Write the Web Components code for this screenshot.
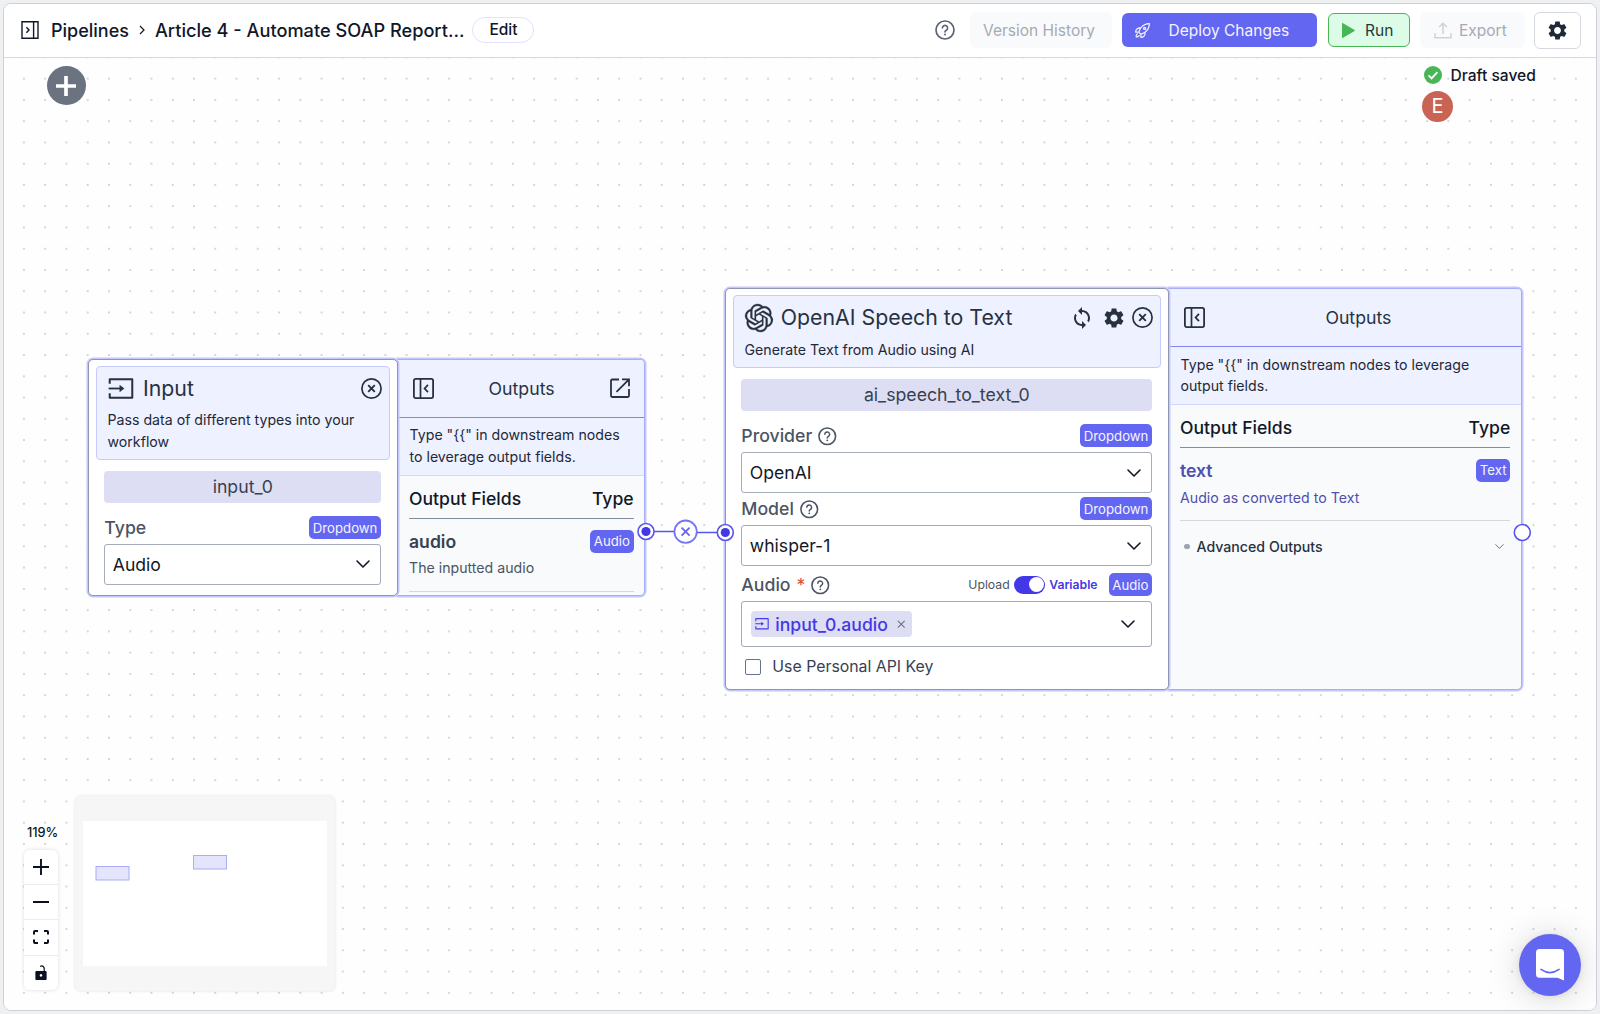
<!DOCTYPE html>
<html lang="en">
<head>
<meta charset="utf-8">
<title>Pipelines</title>
<style>
  html, body { margin: 0; height: 100%; }
  body {
    background: #eef0f2;
    font-family: Inter, "Liberation Sans", sans-serif;
    color: #111827;
    overflow: hidden;
  }
</style>
</head>
<body>
<pipeline-app></pipeline-app>

<script>
const ICONS = {
  sidebar: ['0 0 18 18', '<path d="M1 .8h16v16.4H1zM12.6 1v16" fill="none" stroke="currentColor" stroke-width="1.4"/><path d="M5.4 6.2 8 9l-2.6 2.8" fill="none" stroke="currentColor" stroke-width="1.4"/>'],
  chevronRight: ['0 0 6 10', '<path d="m1 1 4 4-4 4" fill="none" stroke="currentColor" stroke-width="1.2"/>'],
  chevronDown: ['0 0 14 8', '<path d="m1 1 6 6 6-6" fill="none" stroke="currentColor" stroke-width="1.6" stroke-linecap="round" stroke-linejoin="round"/>'],
  help: ['0 0 20 20', '<circle cx="10" cy="10" r="9" fill="none" stroke="currentColor" stroke-width="1.7"/><path d="M7.4 7.9a2.6 2.6 0 1 1 3.9 2.3c-.9.5-1.3 1-1.3 1.8" fill="none" stroke="currentColor" stroke-width="1.6" stroke-linecap="round"/><circle cx="10" cy="14.4" r="1" fill="currentColor"/>'],
  rocket: ['0 0 24 24', '<path fill="none" stroke="currentColor" stroke-width="1.7" stroke-linecap="round" stroke-linejoin="round" d="M15.59 14.37a6 6 0 0 1-5.84 7.38v-4.8m5.84-2.58a14.98 14.98 0 0 0 6.16-12.12A14.98 14.98 0 0 0 9.631 8.41m5.96 5.96a14.926 14.926 0 0 1-5.841 2.58m-.119-8.54a6 6 0 0 0-7.381 5.84h4.8m2.581-5.84a14.927 14.927 0 0 0-2.58 5.84m2.699 2.7c-.103.021-.207.041-.311.06a15.09 15.09 0 0 1-2.448-2.448 14.9 14.9 0 0 1 .06-.312m-2.24 2.39a4.493 4.493 0 0 0-1.757 4.306 4.493 4.493 0 0 0 4.306-1.758M16.5 9a1.5 1.5 0 1 1-3 0 1.5 1.5 0 0 1 3 0Z"/>'],
  play: ['0 0 13 15', '<path d="M0 .4v14.2c0 .3.3.5.6.3l12-7c.3-.2.3-.6 0-.8L.6.1C.3 0 0 .1 0 .4Z" fill="currentColor"/>'],
  upload: ['0 0 18 17', '<path d="M9 12V1.2M5.2 5 9 1.2 12.8 5M1 11.2v4.6h16v-4.6" fill="none" stroke="currentColor" stroke-width="1.5" stroke-linejoin="round"/>'],
  gear: ['2.2 2 19.6 20', '<path fill="currentColor" d="M19.14 12.94c.04-.3.06-.61.06-.94 0-.32-.02-.64-.07-.94l2.03-1.58c.18-.14.23-.41.12-.61l-1.92-3.32c-.12-.22-.37-.29-.59-.22l-2.39.96c-.5-.38-1.03-.7-1.62-.94l-.36-2.54c-.04-.24-.24-.41-.48-.41h-3.84c-.24 0-.43.17-.47.41l-.36 2.54c-.59.24-1.13.57-1.62.94l-2.39-.96c-.22-.08-.47 0-.59.22L2.74 8.87c-.12.21-.08.47.12.61l2.03 1.58c-.05.3-.09.63-.09.94s.02.64.07.94l-2.03 1.58c-.18.14-.23.41-.12.61l1.92 3.32c.12.22.37.29.59.22l2.39-.96c.5.38 1.03.7 1.62.94l.36 2.54c.05.24.24.41.48.41h3.84c.24 0 .44-.17.47-.41l.36-2.54c.59-.24 1.13-.56 1.62-.94l2.39.96c.22.08.47 0 .59-.22l1.92-3.32c.12-.22.07-.47-.12-.61l-2.01-1.58zM12 15.6c-1.98 0-3.6-1.62-3.6-3.6s1.62-3.6 3.6-3.6 3.6 1.62 3.6 3.6-1.62 3.6-3.6 3.6z"/>'],
  sync: ['0 0 24 24', '<path fill="currentColor" d="M12 4V1L8 5l4 4V6c3.31 0 6 2.69 6 6 0 1.01-.25 1.97-.7 2.8l1.46 1.46C19.54 15.03 20 13.57 20 12c0-4.42-3.58-8-8-8zm0 14c-3.31 0-6-2.69-6-6 0-1.01.25-1.97.7-2.8L5.24 7.74C4.46 8.97 4 10.43 4 12c0 4.42 3.58 8 8 8v3l4-4-4-4v3z"/>'],
  close: ['0 0 21 21', '<circle cx="10.5" cy="10.5" r="9.6" fill="none" stroke="currentColor" stroke-width="1.7"/><path d="m7.2 7.2 6.6 6.6m0-6.6-6.6 6.6" stroke="currentColor" stroke-width="1.9"/>'],
  cross: ['0 0 10 10', '<path d="m1 1 8 8M9 1 1 9" stroke="currentColor" stroke-width="1.3"/>'],
  input: ['0 0 26 22', '<path d="M1.2 6V1.2h23.6v19.6H1.2V16" fill="none" stroke="currentColor" stroke-width="2.1" stroke-linejoin="round"/><path d="M0 11h14" stroke="currentColor" stroke-width="1.9"/><path d="m11.5 7.2 5 3.8-5 3.8z" fill="currentColor"/>'],
  openai: ['0 0 24 24', '<path fill="currentColor" stroke="currentColor" stroke-width=".25" d="M22.2819 9.8211a5.9847 5.9847 0 0 0-.5157-4.9108 6.0462 6.0462 0 0 0-6.5098-2.9A6.0651 6.0651 0 0 0 4.9807 4.1818a5.9847 5.9847 0 0 0-3.9977 2.9 6.0462 6.0462 0 0 0 .7427 7.0966 5.98 5.98 0 0 0 .511 4.9107 6.051 6.051 0 0 0 6.5146 2.9001A5.9847 5.9847 0 0 0 13.2599 24a6.0557 6.0557 0 0 0 5.7718-4.2058 5.9894 5.9894 0 0 0 3.9977-2.9001 6.0557 6.0557 0 0 0-.7475-7.0729zm-9.022 12.6081a4.4755 4.4755 0 0 1-2.8764-1.0408l.1419-.0804 4.7783-2.7582a.7948.7948 0 0 0 .3927-.6813v-6.7369l2.02 1.1686a.071.071 0 0 1 .038.052v5.5826a4.504 4.504 0 0 1-4.4945 4.4944zm-9.6607-4.1254a4.4708 4.4708 0 0 1-.5346-3.0137l.142.0852 4.783 2.7582a.7712.7712 0 0 0 .7806 0l5.8428-3.3685v2.3324a.0804.0804 0 0 1-.0332.0615L9.74 19.9502a4.4992 4.4992 0 0 1-6.1408-1.6464zM2.3408 7.8956a4.485 4.485 0 0 1 2.3655-1.9728V11.6a.7664.7664 0 0 0 .3879.6765l5.8144 3.3543-2.0201 1.1685a.0757.0757 0 0 1-.071 0l-4.8303-2.7865A4.504 4.504 0 0 1 2.3408 7.872zm16.5963 3.8558L13.1038 8.364 15.1192 7.2a.0757.0757 0 0 1 .071 0l4.8303 2.7913a4.4944 4.4944 0 0 1-.6765 8.1042v-5.6772a.79.79 0 0 0-.407-.667zm2.0107-3.0231l-.142-.0852-4.7735-2.7818a.7759.7759 0 0 0-.7854 0L9.409 9.2297V6.8974a.0662.0662 0 0 1 .0284-.0615l4.8303-2.7866a4.4992 4.4992 0 0 1 6.6802 4.66zM8.3065 12.863l-2.02-1.1638a.0804.0804 0 0 1-.038-.0567V6.0742a4.4992 4.4992 0 0 1 7.3757-3.4537l-.142.0805L8.704 5.459a.7948.7948 0 0 0-.3927.6813zm1.0976-2.3654l2.602-1.4998 2.6069 1.4998v2.9994l-2.5974 1.4997-2.6067-1.4997Z"/>'],
  panel: ['0 0 21 21', '<rect x=".9" y=".9" width="19.2" height="19.2" rx="1.8" fill="none" stroke="currentColor" stroke-width="1.8"/><path d="M7.5 1v19" stroke="currentColor" stroke-width="1.7"/><path d="M15 6.8 11.6 10.5l3.4 3.7" fill="none" stroke="currentColor" stroke-width="1.8"/>'],
  external: ['0 0 20 20', '<path d="M9 1.5H2.2q-1.2 0-1.2 1.2v15.1q0 1.2 1.2 1.2h15.6q1.2 0 1.2-1.2V11" fill="none" stroke="currentColor" stroke-width="1.8"/><path d="M12 1.3h7v7M18.5 1.8 6.5 13.8" fill="none" stroke="currentColor" stroke-width="1.8"/>'],
  check: ['0 0 18 18', '<circle cx="9" cy="9" r="9" fill="#46b754"/><path d="m4.6 9.3 3 3 5.8-6.2" fill="none" stroke="#fff" stroke-width="1.9"/>'],
  plus: ['0 0 20 20', '<path d="M10 0v20M0 10h20" stroke="currentColor" stroke-width="3.7"/>'],
  zoomIn: ['0 0 16 16', '<path d="M8 0v16M0 8h16" stroke="currentColor" stroke-width="1.9"/>'],
  zoomOut: ['0 0 16 16', '<path d="M0 8h16" stroke="currentColor" stroke-width="1.9"/>'],
  fit: ['0 0 16 14', '<path d="M5 1H2Q1 1 1 2v2.5M11 1h3q1 0 1 1v2.5M5 13H2q-1 0-1-1V9.5M11 13h3q1 0 1-1V9.5" fill="none" stroke="currentColor" stroke-width="2"/>'],
  lock: ['0 0 12 16', '<path fill="currentColor" fill-rule="evenodd" d="M1 6.5h7.8V4.2C8.8 2.6 7.9 1.6 6.5 1.6q-.8 0-1.3.4l-.3-1C5.3.4 6 .2 6.7.2c2 0 3.4 1.6 3.4 3.8v2.5h.9q1 0 1 1V15q0 1-1 1H1q-1 0-1-1V7.5q0-1 1-1ZM6 9.7a1.4 1.4 0 1 0 .01 0Z"/>'],
  chat: ['0 0 28 32', '<path d="M3.5 0h21Q28 0 28 3.5V31.5L21.5 28.8H3.5Q0 28.8 0 25.3V3.5Q0 0 3.5 0Z" fill="#fff"/><path d="M5 20.4q9 6.4 18 0" fill="none" stroke="#6366f1" stroke-width="1.7" stroke-linecap="round"/>']
};

class BaseElement extends HTMLElement {
  constructor() {
    super();
    this.attachShadow({ mode: 'open' });
  }

  connectedCallback() {
    this.shadowRoot.innerHTML = this.render();
  }

  attr(name, fallback = '') {
    return this.getAttribute(name) || fallback;
  }
}

class UiIcon extends BaseElement {
  render() {
    const [box, body] = ICONS[this.attr('name')];
    const w = this.attr('w', '16');
    const h = this.attr('h', w);
    return `
      <style>
        :host { display: inline-flex; flex: none; }
        svg { display: block; overflow: visible; }
      </style>
      <svg width="${w}" height="${h}" viewBox="${box}" aria-hidden="true">${body}</svg>
    `;
  }
}

class TypeBadge extends BaseElement {
  render() {
    return `
      <style>
        :host {
          display: inline-flex;
          align-items: center;
          flex: none;
          height: 23px;
          padding: 0 3.8px;
          border-radius: 5px;
          background: #6366f1;
          color: #f5f5ff;
          font-size: 13.2px;
          font-weight: 400;
        }
      </style>
      <slot></slot>
    `;
  }
}

class ToolButton extends BaseElement {
  render() {
    return `
      <style>
        :host {
          display: flex;
          align-items: center;
          box-sizing: border-box;
          flex: none;
          height: 34px;
          border-radius: 6px;
          font-size: 15.5px;
        }
        :host([kind="muted"]) {
          height: 36px;
          background: #f9fafb;
          color: #a5aab4;
        }
        :host([kind="primary"]) {
          background: #6366f1;
          color: #f3f3ff;
        }
        :host([kind="run"]) {
          background: #dcfce7;
          border: 1.5px solid #46b754;
          color: #1f3b39;
        }
        :host([kind="outline"]) {
          height: 37px;
          background: #fff;
          border: 1.5px solid #d6d9e0;
          color: #1f2937;
          justify-content: center;
        }
      </style>
      <slot></slot>
    `;
  }
}

class TopBar extends BaseElement {
  render() {
    return `
      <style>
        :host {
          display: flex;
          align-items: center;
          box-sizing: border-box;
          height: 54px;
          padding: 0 15.5px 1px 17px;
          border-bottom: 1px solid #d5d8df;
          background: #fff;
          font-size: 18px;
          font-weight: 500;
          color: #0f172a;
        }
        .root { margin: 0 10px 0 12px; }
        .title { margin-left: 10px; font-size: 18.2px; white-space: nowrap; }
        .edit {
          box-sizing: border-box;
          width: 62px;
          height: 26px;
          margin-left: 8px;
          border: 1.2px solid #dfe1fd;
          border-radius: 13px;
          font-size: 15.5px;
          line-height: 24px;
          text-align: center;
        }
        .actions {
          display: flex;
          align-items: center;
          margin-left: auto;
          font-weight: 400;
        }
        .help { color: #5b6472; margin-right: 14.5px; }
        .history { width: 142px; padding-right: 3px; justify-content: center; margin-right: 10.5px; }
        .deploy { width: 194.5px; padding-left: 12px; gap: 17.5px; margin-right: 11px; }
        .run { width: 82.5px; padding-left: 13.5px; gap: 10px; margin-right: 10px; }
        .run ui-icon { color: #46b754; }
        .export { width: 105px; padding-left: 14px; gap: 7px; margin-right: 9px; }
        .export ui-icon { color: #cfd2d8; }
        .settings { width: 46.5px; }
      </style>
      <ui-icon name="sidebar" w="18"></ui-icon>
      <span class="root">Pipelines</span>
      <ui-icon name="chevronRight" w="6" h="10"></ui-icon>
      <span class="title">Article 4 - Automate SOAP Report...</span>
      <span class="edit">Edit</span>
      <div class="actions">
        <ui-icon class="help" name="help" w="20"></ui-icon>
        <tool-button class="history" kind="muted">Version History</tool-button>
        <tool-button class="deploy" kind="primary"><ui-icon name="rocket" w="17"></ui-icon>Deploy Changes</tool-button>
        <tool-button class="run" kind="run"><ui-icon name="play" w="13" h="15"></ui-icon>Run</tool-button>
        <tool-button class="export" kind="muted"><ui-icon name="upload" w="18" h="17"></ui-icon>Export</tool-button>
        <tool-button class="settings" kind="outline"><ui-icon name="gear" w="19"></ui-icon></tool-button>
      </div>
    `;
  }
}

// A node on the canvas: the settings card plus a slot for its outputs panel.
class PipelineNode extends BaseElement {
  render() {
    return `
      <style>
        :host { display: flex; position: absolute; font-size: 14.17px; }
        .card {
          box-sizing: border-box;
          flex: none;
          width: var(--card-width);
          padding: 6px 7px 0;
          background: #fff;
          border: 1px solid #8e96b4;
          border-radius: 5px;
          box-shadow: 0 0 0 1.5px #c4c7fb;
          position: relative;
          z-index: 1;
        }
        header {
          box-sizing: border-box;
          padding: 0 7px 7px 10.5px;
          border: 1px solid #c7cafc;
          border-radius: 4px;
          background: #eef1ff;
          line-height: 21.26px;
          color: #1f2937;
        }
        .head { display: flex; align-items: center; height: 42.4px; color: #27313f; }
        h2 { margin: 0 0 0 var(--title-gap, 9px); font-size: 21.3px; font-weight: 400; flex: 1; }
        .tools { display: flex; align-items: center; }
        .name {
          margin: 11px 8.3px 12.8px;
          height: 32px;
          border-radius: 4px;
          background: #dddef3;
          color: #374151;
          font-size: 17.7px;
          line-height: 32px;
          text-align: center;
        }
        .fields { display: block; padding: 0 8.3px; }
      </style>
      <section class="card">
        <header>
          <div class="head">
            <slot name="icon"></slot>
            <h2>${this.attr('heading')}</h2>
            <div class="tools"><slot name="tools"></slot><ui-icon name="close" w="21"></ui-icon></div>
          </div>
          <div>${this.attr('description')}</div>
        </header>
        <div class="name">${this.attr('node-id')}</div>
        <div class="fields"><slot></slot></div>
      </section>
      <slot name="outputs"></slot>
    `;
  }
}

class NodeField extends BaseElement {
  render() {
    const required = this.hasAttribute('required') ? '<span class="star">*</span>' : '';
    const help = this.hasAttribute('help') ? '<ui-icon name="help" w="18.5"></ui-icon>' : '';
    return `
      <style>
        :host { display: block; }
        .row { display: flex; align-items: center; height: 24px; margin-bottom: 4.2px; color: #4b5563; }
        .label { font-size: 17.7px; font-weight: 500; margin-right: 6px; }
        .star { color: #dc4a41; font-size: 17.6px; margin-right: 6px; }
        .extra { display: flex; align-items: center; margin-left: auto; }
      </style>
      <div class="row">
        <span class="label">${this.attr('label')}</span>${required}${help}
        <span class="extra"><slot name="extra"></slot><type-badge>${this.attr('type')}</type-badge></span>
      </div>
      <slot></slot>
    `;
  }
}

class SelectBox extends BaseElement {
  render() {
    return `
      <style>
        :host {
          display: flex;
          align-items: center;
          justify-content: space-between;
          box-sizing: border-box;
          height: 41px;
          padding: 0 10px 0 7.5px;
          border: 1px solid #a5abb8;
          border-radius: 3px;
          background: #fff;
          color: #111827;
          font-size: 17.6px;
        }
        :host([tall]) { height: 46px; padding: 0 16px 0 9px; }
      </style>
      <slot></slot>
      <ui-icon name="chevronDown" w="14" h="8"></ui-icon>
    `;
  }
}

class VariableChip extends BaseElement {
  render() {
    return `
      <style>
        :host {
          display: flex;
          align-items: center;
          height: 26.5px;
          padding: 0 7px 0 4px;
          border-radius: 4px;
          background: #dddef3;
          color: #4338e8;
          font-size: 17.6px;
          font-weight: 500;
        }
        span { margin: 0 9px 0 6px; }
        .remove { color: #6b7280; }
      </style>
      <ui-icon name="input" w="14" h="11.5"></ui-icon>
      <span><slot></slot></span>
      <ui-icon class="remove" name="cross" w="8.5"></ui-icon>
    `;
  }
}

class ModeToggle extends BaseElement {
  render() {
    return `
      <style>
        :host { display: flex; align-items: center; margin-right: 11px; font-size: 12.25px; color: #4b5563; }
        .track {
          display: flex;
          justify-content: flex-end;
          box-sizing: border-box;
          width: 31.5px;
          height: 18px;
          padding: 1.5px;
          margin: 0 4px;
          border-radius: 9px;
          background: #4338e8;
        }
        .thumb { width: 15px; height: 15px; border-radius: 50%; background: #fff; }
        b { font-weight: 600; font-size: 12.2px; color: #4338e8; }
      </style>
      <span>Upload</span>
      <span class="track"><span class="thumb"></span></span>
      <b>Variable</b>
    `;
  }
}

class CheckRow extends BaseElement {
  render() {
    return `
      <style>
        :host { display: flex; align-items: center; height: 39.5px; padding-left: 3.5px; font-size: 15.85px; color: #374151; }
        i { box-sizing: border-box; width: 16.5px; height: 16.5px; margin-right: 11px; border: 1.6px solid #64748b; border-radius: 2px; }
      </style>
      <i></i><slot></slot>
    `;
  }
}

class OutputPanel extends BaseElement {
  render() {
    const external = this.hasAttribute('external') ? '<ui-icon name="external" w="20"></ui-icon>' : '';
    return `
      <style>
        :host {
          display: block;
          box-sizing: border-box;
          flex: 1;
          border: 1px solid #a9acf8;
          border-left: 0;
          border-radius: 0 5px 5px 0;
          box-shadow: 0 0 0 1.5px #c4c7fb;
          background: #f8fafc;
          overflow: hidden;
        }
        .head {
          display: flex;
          align-items: center;
          box-sizing: border-box;
          height: 57.5px;
          padding: 0 8.5px 0 15px;
          border-bottom: 1px solid #8284f3;
          background: #eef1ff;
          color: #27313f;
          font-size: 17.7px;
        }
        :host([external]) .head { padding-right: 14.5px; }
        .head span { flex: 1; text-align: center; }
        .hint {
          box-sizing: border-box;
          height: 58px;
          padding: 6.9px 11px 0 12px;
          border-bottom: 1px solid #d3d6fd;
          background: #eef1ff;
          line-height: 21.26px;
          color: #1f2937;
        }
        .fields { padding: 0 10.5px 0 11.5px; }
        .columns {
          display: flex;
          justify-content: space-between;
          align-items: center;
          box-sizing: border-box;
          height: 43px;
          padding-top: 4px;
          border-bottom: 1.4px solid #848d9f;
          font-size: 17.6px;
          font-weight: 500;
        }
      </style>
      <div class="head"><ui-icon name="panel" w="21"></ui-icon><span>Outputs</span>${external}</div>
      <div class="hint">Type "{{" in downstream nodes to leverage output fields.</div>
      <div class="fields">
        <div class="columns"><span>Output Fields</span><span>Type</span></div>
        <slot></slot>
      </div>
    `;
  }
}

class OutputField extends BaseElement {
  render() {
    return `
      <style>
        :host {
          display: block;
          box-sizing: border-box;
          height: 73.5px;
          padding-top: 11px;
          border-bottom: 1px solid #d5d8dd;
          color: #4b5563;
        }
        :host([linked]) { color: #4f4fae; }
        .row { display: flex; justify-content: space-between; align-items: center; height: 23px; }
        b { font-size: 17.6px; font-weight: 600; color: #374151; }
        :host([linked]) b { color: #4f4fae; }
        p { margin: 4.7px 0 0; line-height: 21.26px; }
      </style>
      <div class="row"><b>${this.attr('name')}</b><type-badge>${this.attr('type')}</type-badge></div>
      <p><slot></slot></p>
    `;
  }
}

class AdvancedOutputs extends BaseElement {
  render() {
    return `
      <style>
        :host { display: flex; align-items: center; height: 50px; padding: 0 6px 0 4px; font-weight: 500; color: #27313f; }
        i { width: 5.5px; height: 5.5px; margin-right: 7px; border-radius: 50%; background: #9ca3af; }
        ui-icon { margin-left: auto; color: #6b7484; }
      </style>
      <i></i><slot></slot><ui-icon name="chevronDown" w="9" h="5"></ui-icon>
    `;
  }
}

// Dotted grid drawn with a pattern, so fractional spacing stays even.
class DotGrid extends BaseElement {
  render() {
    return `
      <style>
        :host { display: block; position: absolute; inset: 0; }
        svg { display: block; width: 100%; height: 100%; }
      </style>
      <svg aria-hidden="true">
        <pattern id="dots" x="9.3" y="10" width="21.26" height="21.26" patternUnits="userSpaceOnUse">
          <circle cx="10.63" cy="10.63" r=".9" fill="#bfc3ca"/>
        </pattern>
        <rect width="100%" height="100%" fill="url(#dots)"/>
      </svg>
    `;
  }
}

class NodeEdges extends BaseElement {
  render() {
    return `
      <style>
        :host { display: block; position: absolute; inset: 0; z-index: 2; }
        svg { display: block; width: 100%; height: 100%; }
      </style>
      <svg aria-hidden="true" fill="#fff" stroke="#5855ee" stroke-width="1.6">
        <path d="M642 473.5h28M692 474.5h29"/>
        <circle cx="642" cy="473.5" r="8"/>
        <circle cx="642" cy="473.5" r="4.6" fill="#4338e8" stroke="none"/>
        <circle cx="721.3" cy="474.5" r="8"/>
        <circle cx="721.3" cy="474.5" r="4.6" fill="#4338e8" stroke="none"/>
        <circle cx="681.6" cy="473.7" r="11.2" stroke="#7375f2" stroke-width="1.8"/>
        <path d="m677.6 469.7 8 8m0-8-8 8" stroke="#6366f1" stroke-width="1.8"/>
        <circle cx="1518.3" cy="474.5" r="8"/>
      </svg>
    `;
  }
}

class SaveStatus extends BaseElement {
  render() {
    return `
      <style>
        :host { display: flex; flex-direction: column; gap: 6.5px; position: absolute; left: 1418px; top: 7.5px; font-size: 15.6px; font-weight: 500; }
        .saved { display: flex; align-items: center; gap: 9px; height: 19px; padding-left: 1.5px; }
        .avatar {
          width: 31px;
          height: 31px;
          border-radius: 50%;
          background: #c96455;
          color: #fff;
          font-size: 20px;
          font-weight: 400;
          line-height: 31px;
          text-align: center;
        }
      </style>
      <div class="saved"><ui-icon name="check" w="18"></ui-icon>Draft saved</div>
      <div class="avatar">E</div>
    `;
  }
}

class AddButton extends BaseElement {
  render() {
    return `
      <style>
        :host {
          display: flex;
          align-items: center;
          justify-content: center;
          position: absolute;
          left: 42.7px;
          top: 8px;
          width: 39px;
          height: 39px;
          border-radius: 50%;
          background: #6b7280;
          color: #fff;
        }
      </style>
      <ui-icon name="plus" w="20"></ui-icon>
    `;
  }
}

class ZoomControls extends BaseElement {
  render() {
    const buttons = [['zoomIn', 16, 16], ['zoomOut', 16, 16], ['fit', 16, 14], ['lock', 12, 15]];
    return `
      <style>
        :host { display: flex; flex-direction: column; align-items: center; position: absolute; left: 18.6px; top: 766px; width: 36px; }
        .level { height: 26px; font-size: 12.8px; font-weight: 500; line-height: 18px; margin-left: 4px; }
        .stack { border-radius: 6px; background: #fff; box-shadow: 0 0 4px rgba(0, 0, 0, .13); overflow: hidden; }
        .btn {
          display: flex;
          align-items: center;
          justify-content: center;
          box-sizing: border-box;
          width: 34px;
          height: 35.2px;
          border-bottom: 1.4px solid #ececee;
          color: #0b1020;
        }
        .btn:last-child { border-bottom: 0; height: 34px; }
      </style>
      <div class="level">119%</div>
      <div class="stack">
        ${buttons.map(([name, w, h]) => `<div class="btn"><ui-icon name="${name}" w="${w}" h="${h}"></ui-icon></div>`).join('')}
      </div>
    `;
  }
}

class MiniMap extends BaseElement {
  render() {
    return `
      <style>
        :host {
          display: flex;
          align-items: center;
          justify-content: center;
          position: absolute;
          left: 71px;
          top: 738px;
          width: 260px;
          height: 195px;
          border-radius: 6px;
          background: #f6f6f6;
          box-shadow: 0 0 3px rgba(0, 0, 0, .13);
        }
        svg { display: block; background: #fff; }
      </style>
      <svg width="244" height="145" fill="#e4e5fd" stroke="#a9abf7">
        <rect x="13" y="45.5" width="33" height="13.5"/>
        <rect x="110.5" y="34.5" width="33" height="13.5"/>
      </svg>
    `;
  }
}

class ChatLauncher extends BaseElement {
  render() {
    return `
      <style>
        :host {
          display: flex;
          align-items: center;
          justify-content: center;
          position: absolute;
          left: 1515.4px;
          top: 876px;
          width: 62px;
          height: 62px;
          border-radius: 50%;
          background: #6366f1;
          box-shadow: 0 1px 7px rgba(0, 0, 0, .08), 0 2px 34px rgba(0, 0, 0, .16);
        }
      </style>
      <ui-icon name="chat" w="28" h="32"></ui-icon>
    `;
  }
}

class PipelineApp extends BaseElement {
  render() {
    return `
      <style>
        :host { display: block; box-sizing: border-box; height: 100vh; padding: 3px; }
        .frame {
          display: flex;
          flex-direction: column;
          box-sizing: border-box;
          height: 1008px;
          border: 1px solid #cdd0d8;
          border-radius: 8px;
          background: #fff;
          overflow: hidden;
        }
        .canvas { flex: 1; position: relative; overflow: hidden; background: #fefefe; }
        .input { left: 84px; top: 301px; width: 557.2px; height: 237px; --card-width: 309.5px; --title-gap: 9px; }
        .speech { left: 721px; top: 230.4px; width: 796.8px; height: 401.4px; --card-width: 443.5px; --title-gap: 8.3px; }
        .input > [slot="icon"] { margin-left: .5px; }
        .speech > [slot="tools"] { margin-right: 8px; }
        .speech > .sync { margin-right: 9.5px; }
        .provider { margin-bottom: 3.8px; }
        .model { margin-bottom: 6.8px; }
      </style>
      <div class="frame">
        <top-bar></top-bar>
        <div class="canvas">
          <dot-grid></dot-grid>
          <add-button></add-button>
          <save-status></save-status>

          <pipeline-node class="input" heading="Input" node-id="input_0"
            description="Pass data of different types into your workflow">
            <ui-icon slot="icon" name="input" w="26" h="21"></ui-icon>
            <node-field label="Type" type="Dropdown"><select-box>Audio</select-box></node-field>
            <output-panel slot="outputs" external>
              <output-field name="audio" type="Audio">The inputted audio</output-field>
            </output-panel>
          </pipeline-node>

          <pipeline-node class="speech" heading="OpenAI Speech to Text" node-id="ai_speech_to_text_0"
            description="Generate Text from Audio using AI">
            <ui-icon slot="icon" name="openai" w="28"></ui-icon>
            <ui-icon slot="tools" class="sync" name="sync" w="24"></ui-icon>
            <ui-icon slot="tools" name="gear" w="20"></ui-icon>
            <node-field class="provider" label="Provider" type="Dropdown" help><select-box>OpenAI</select-box></node-field>
            <node-field class="model" label="Model" type="Dropdown" help><select-box>whisper-1</select-box></node-field>
            <node-field label="Audio" type="Audio" help required>
              <mode-toggle slot="extra"></mode-toggle>
              <select-box tall><variable-chip>input_0.audio</variable-chip></select-box>
            </node-field>
            <check-row>Use Personal API Key</check-row>
            <output-panel slot="outputs">
              <output-field name="text" type="Text" linked>Audio as converted to Text</output-field>
              <advanced-outputs>Advanced Outputs</advanced-outputs>
            </output-panel>
          </pipeline-node>

          <node-edges></node-edges>
          <zoom-controls></zoom-controls>
          <mini-map></mini-map>
          <chat-launcher></chat-launcher>
        </div>
      </div>
    `;
  }
}

customElements.define('ui-icon', UiIcon);
customElements.define('type-badge', TypeBadge);
customElements.define('tool-button', ToolButton);
customElements.define('top-bar', TopBar);
customElements.define('pipeline-node', PipelineNode);
customElements.define('node-field', NodeField);
customElements.define('select-box', SelectBox);
customElements.define('variable-chip', VariableChip);
customElements.define('mode-toggle', ModeToggle);
customElements.define('check-row', CheckRow);
customElements.define('output-panel', OutputPanel);
customElements.define('output-field', OutputField);
customElements.define('advanced-outputs', AdvancedOutputs);
customElements.define('dot-grid', DotGrid);
customElements.define('node-edges', NodeEdges);
customElements.define('save-status', SaveStatus);
customElements.define('add-button', AddButton);
customElements.define('zoom-controls', ZoomControls);
customElements.define('mini-map', MiniMap);
customElements.define('chat-launcher', ChatLauncher);
customElements.define('pipeline-app', PipelineApp);
</script>
</body>
</html>
